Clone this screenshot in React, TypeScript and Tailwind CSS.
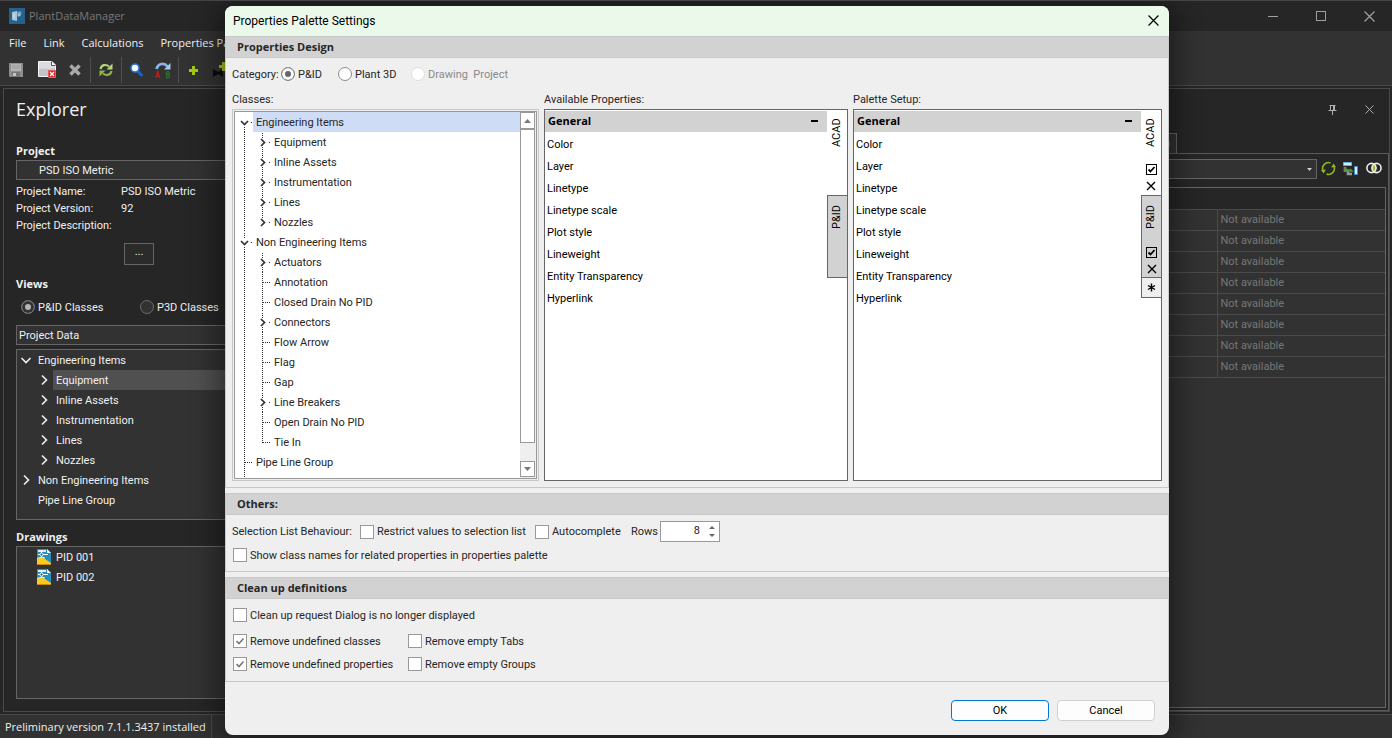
import { ReactNode, useState } from "react";
import clsx from "clsx";

type TreeNode = {
    label: string
    level: number
    state?: "open" | "closed"
    last?: boolean
}

const classNodes: TreeNode[] = [
    { label: "Engineering Items", level: 0, state: "open" },
    { label: "Equipment", level: 1, state: "closed" },
    { label: "Inline Assets", level: 1, state: "closed" },
    { label: "Instrumentation", level: 1, state: "closed" },
    { label: "Lines", level: 1, state: "closed" },
    { label: "Nozzles", level: 1, state: "closed", last: true },
    { label: "Non Engineering Items", level: 0, state: "open" },
    { label: "Actuators", level: 1, state: "closed" },
    { label: "Annotation", level: 1 },
    { label: "Closed Drain No PID", level: 1 },
    { label: "Connectors", level: 1, state: "closed" },
    { label: "Flow Arrow", level: 1 },
    { label: "Flag", level: 1 },
    { label: "Gap", level: 1 },
    { label: "Line Breakers", level: 1, state: "closed" },
    { label: "Open Drain No PID", level: 1 },
    { label: "Tie In", level: 1, last: true },
    { label: "Pipe Line Group", level: 0 },
    { label: "Signal Line Group", level: 0 },
]

const explorerNodes: TreeNode[] = [
    { label: "Engineering Items", level: 0, state: "open" },
    { label: "Equipment", level: 1, state: "closed" },
    { label: "Inline Assets", level: 1, state: "closed" },
    { label: "Instrumentation", level: 1, state: "closed" },
    { label: "Lines", level: 1, state: "closed" },
    { label: "Nozzles", level: 1, state: "closed" },
    { label: "Non Engineering Items", level: 0, state: "closed" },
    { label: "Pipe Line Group", level: 0 },
]

const properties = ["Color", "Layer", "Linetype", "Linetype scale", "Plot style", "Lineweight", "Entity Transparency", "Hyperlink"]

const CrossIcon = ({ size, className }: { size: number, className?: string }) => (
    <svg width={size} height={size} viewBox="0 0 10 10" className={className} stroke="currentColor" strokeWidth="1.1" fill="none">
        <path d="M0.5 0.5L9.5 9.5M9.5 0.5L0.5 9.5" />
    </svg>
)

const SaveIcon = () => (
    <svg width="14" height="14" viewBox="0 0 14 14">
        <path d="M0 0H14V14H1L0 13Z" fill="#8f8f8f" />
        <path d="M2 1H12V8H2Z" fill="#b4b4b4" />
        <path d="M3 3H11M3 5H11" stroke="#9a9a9a" />
        <path d="M3 9H11V14H3Z" fill="#777" />
        <path d="M4 10H7V13H4Z" fill="#c4c4c4" />
    </svg>
)

const DocumentDeleteIcon = () => (
    <svg width="19" height="18" viewBox="0 0 19 18">
        <path d="M0.5 0.5H14L17.5 4V15.5H0.5Z" fill="#dcdcdf" stroke="#f4f4f4" />
        <path d="M1 8C7 7 12 9 17 7V15H1Z" fill="#c3c3c9" />
        <path d="M13.5 0.5V4.5H17.5" fill="#fff" stroke="#555" />
        <path d="M10.5 9.5H17.5V16.5H10.5Z" fill="#d92525" stroke="#ef5a5a" />
        <path d="M12 11L16 15M16 11L12 15" stroke="#fff" strokeWidth="1.3" />
    </svg>
)

const RefreshIcon = () => (
    <svg width="14" height="14" viewBox="0 0 14 14" fill="none">
        <path d="M1.5 6C2.5 1.5 7 1 10 3.5" stroke="#b7d77a" strokeWidth="2.2" />
        <path d="M13.5 0.5V6.5H7.5Z" fill="#b7d77a" />
        <path d="M12.5 8C11.5 12.500 7 13 4 10.5" stroke="#8db548" strokeWidth="2.2" />
        <path d="M0.5 13.5V7.5H6.5Z" fill="#8db548" />
    </svg>
)

const SearchIcon = () => (
    <svg width="13" height="14" viewBox="0 0 13 14">
        <path d="M8 8.5L11.5 12" stroke="#1e62c9" strokeWidth="3" strokeLinecap="round" />
        <circle cx="5" cy="5" r="4" fill="#f1f8ff" stroke="#2a70d6" strokeWidth="1.6" />
    </svg>
)

const ReplaceIcon = () => (
    <svg width="16" height="17" viewBox="0 0 16 17">
        <path d="M1.5 7C3 1.500 9 0 12.5 4.5" fill="none" stroke="#84b5e6" strokeWidth="2.8" />
        <path d="M15.5 1V7.5H9Z" fill="#a5caef" />
        <path d="M0.8 16L2.7 9.5L4.7 16M1.3 14H4.2" fill="none" stroke="#b52020" strokeWidth="1.4" />
        <path d="M11.5 9.7V15.7M11.5 9.7H13.5Q15 11.2 13.5 12.5H11.5H14Q15.5 14.5 13.5 15.7H11.500" fill="none" stroke="#2f6d22" strokeWidth="1.4" />
    </svg>
)

const DrawingIcon = () => (
    <svg width="14" height="16" viewBox="0 0 14 16">
        <path d="M0 0H10L14 4V15H0Z" fill="#258fbd" />
        <path d="M1 1H9V3H1Z" fill="#d8f1fa" />
        <path d="M10 0L14 4H10Z" fill="#fff" />
        <path d="M1 5.5H11M4.500 1V9" stroke="#fff" />
        <circle cx="4.5" cy="5.5" r="1.5" fill="#145d80" stroke="#fff" />
        <path d="M0 10L5 8L14 14V16H0Z" fill="#fdc91d" />
        <path d="M0 15.5H14" stroke="#c58b0c" />
        <path d="M0 9.5L5 8L8 9" fill="none" stroke="#fff1b5" />
    </svg>
)

const Chevron = ({ open }: { open: boolean }) => (
    <svg width="12" height="12" viewBox="0 0 12 12" fill="none" stroke="currentColor" strokeWidth="1.6">
        <path d={open ? "M1.5 4L6 8.5L10.5 4" : "M4 1.5L8.5 6L4 10.5"} />
    </svg>
)

/* Dotted connector cell of the classes tree, with the expand arrow on top */
const Guide = ({ node }: { node: TreeNode }) => (
    <svg width="18" height="20" viewBox="0 0 18 20" className="shrink-0" fill="none" stroke="#333">
        {node.state
            ? <>
                {node.label !== "Engineering Items" && <path d="M9.5 1V6" strokeDasharray="1 1" />}
                {!node.last && <path d="M9.5 15V20" strokeDasharray="1 1" />}
                <path d="M16 10.5H17" />
                <path d={node.state === "open" ? "M6 9L9.5 12.5L13 9" : "M8 7L11.5 10.5L8 14"} strokeWidth="1.7" />
            </>
            : <>
                <path d={node.last ? "M9.5 0V11" : "M9.5 0V20"} strokeDasharray="1 1" />
                <path d="M10 10.5H17" strokeDasharray="1 1" />
            </>}
    </svg>
)

const ClassRow = ({ node, selected }: { node: TreeNode, selected: boolean }) => (
    <li className="flex h-5 shrink-0">
        {node.level === 1 && (
            <svg width="18" height="20" viewBox="0 0 18 20" className="shrink-0">
                <path d="M9.5 0V20" stroke="#333" strokeDasharray="1 1" />
            </svg>
        )}
        <Guide node={node} />
        <span className={clsx("h-5 flex-1 pl-[3px] leading-[22px]", selected && "bg-[#cfdcf5]")}>{node.label}</span>
    </li>
)

const CheckField = ({ label, className, defaultChecked }: { label: string, className?: string, defaultChecked?: boolean }) => (
    <label className={clsx("flex h-5 items-center gap-[3px] whitespace-nowrap", className)}>
        <span className="grid">
            <input type="checkbox" defaultChecked={defaultChecked} className="peer col-start-1 row-start-1 size-3.5 appearance-none border border-[#999] bg-white" />
            <svg width="14" height="14" viewBox="0 0 14 14" className="pointer-events-none invisible col-start-1 row-start-1 peer-checked:visible" fill="none" stroke="#777" strokeWidth="1.6">
                <path d="M3.5 7L6 9.5L10.5 4.5" />
            </svg>
        </span>
        <span className="pt-0.5">{label}</span>
    </label>
)

const CategoryRadio = ({ label, className, ...rest }: { label: string, className?: string, defaultChecked?: boolean, disabled?: boolean }) => (
    <label className={clsx("flex items-center gap-[3px] whitespace-nowrap", className)}>
        <input type="radio" name="category" {...rest} className="size-3.5 appearance-none rounded-full border border-[#8c8c8c] bg-white checked:bg-[#666] checked:shadow-[inset_0_0_0_3px_#fff] disabled:border-[#ddd]" />
        <span className="pt-0.5">{label}</span>
    </label>
)

const ViewRadio = ({ label, defaultChecked, className }: { label: string, defaultChecked?: boolean, className?: string }) => (
    <label className={clsx("flex items-center gap-[3px] whitespace-nowrap", className)}>
        <input type="radio" name="view" defaultChecked={defaultChecked} className="size-3.5 appearance-none rounded-full border border-[#6e6e6e] bg-[#323232] checked:bg-[#b5b5b5] checked:shadow-[inset_0_0_0_3px_#323232]" />
        <span className="pt-0.5">{label}</span>
    </label>
)

const Section = ({ title, className, children }: { title: string, className?: string, children: ReactNode }) => (
    <section className="border-x border-b border-[#c8c8c8]">
        <h2 className="h-[22px] border-y border-[#c8c8c8] bg-[#d2d2d2] pl-[11px] font-['Open_Sans',sans-serif] font-bold leading-5">{title}</h2>
        <div className={clsx("px-1.5", className)}>{children}</div>
    </section>
)

const TabTools = () => (
    <>
        <label className="grid">
            <input type="checkbox" aria-label="Visible" defaultChecked className="peer col-start-1 row-start-1 size-[11px] appearance-none border border-black" />
            <svg width="11" height="11" viewBox="0 0 11 11" className="pointer-events-none invisible col-start-1 row-start-1 peer-checked:visible" fill="none" stroke="#000" strokeWidth="1.8">
                <path d="M2.5 5.5L4.5 7.5L8.5 3" />
            </svg>
        </label>
        <button aria-label="Remove tab" className="mt-1.5 grid h-2.5 place-items-center">
            <svg width="10" height="10" viewBox="0 0 10 10" stroke="#000" strokeWidth="1.4"><path d="M1 1L9 9M9 1L1 9" /></svg>
        </button>
    </>
)

const PropertyBox = ({ editable }: { editable?: boolean }) => (
    <div className="flex h-[372px] border border-[#666] bg-white pt-px text-black">
        <div className="min-w-0 flex-1">
            <div className="flex h-[21px] items-center justify-between bg-[#d2d2d2] pl-[3px] pr-[9px]">
                <h3 className="font-['Open_Sans',sans-serif] font-bold">General</h3>
                <button aria-label="Collapse" className="mb-0.5 h-[2px] w-[7px] bg-black" />
            </div>
            <ul>
                {properties.map(property => <li key={property} className="h-[22px] pl-[2px] leading-[26px]">{property}</li>)}
            </ul>
        </div>
        <div className="flex w-5 flex-col">
            <div className="flex h-[84px] flex-col items-center">
                <button className="mt-[7px] h-[29px] rotate-180 [writing-mode:vertical-rl]">ACAD</button>
                {editable && <div className="mt-[17px] flex flex-col items-center"><TabTools /></div>}
            </div>
            <div className="-mr-px flex h-[83px] flex-col items-center border border-[#666] bg-[#d2d2d2]">
                <button className="mt-2 h-[26px] rotate-180 [writing-mode:vertical-rl]">P&amp;ID</button>
                {editable && <div className="mt-[17px] flex flex-col items-center"><TabTools /></div>}
            </div>
            {editable && (
                <button aria-label="New tab" className="-mr-px grid h-5 place-items-center border border-t-0 border-[#666] bg-[#efefef]">
                    <svg width="9" height="9" viewBox="0 0 9 9" stroke="#000" strokeWidth="1.4">
                        <path d="M4.5 0.5V8.5M1 2.5L8 6.5M8 2.5L1 6.5" />
                    </svg>
                </button>
            )}
        </div>
    </div>
)

const PaletteDialog = () => {
    const [rows, setRows] = useState(8)

    return (
        <div role="dialog" aria-labelledby="dialog-title" className="w-[944px] overflow-hidden rounded-lg bg-[#efefef] text-[#262626] shadow-[0_4px_28px_6px_rgba(0,0,0,0.45)]">
            <div className="flex h-[30px] items-center justify-between bg-[#eaf9ea] pl-2 pr-2.5 text-black">
                <h1 id="dialog-title" className="text-xs">Properties Palette Settings</h1>
                <button aria-label="Close" className="pb-0.5"><CrossIcon size={11} /></button>
            </div>

            <Section title="Properties Design" className="pb-1.5 pt-1.5">
                <div className="flex h-5 items-center">
                    <span className="w-[49px] pt-0.5">Category:</span>
                    <CategoryRadio label="P&ID" defaultChecked className="w-[57px]" />
                    <CategoryRadio label="Plant 3D" className="w-[73px]" />
                    <CategoryRadio label={"Drawing\u00a0 Project"} disabled className="text-[#8a8a8a]" />
                </div>
                <div className="mt-[7px] grid grid-cols-[307fr_304fr_309fr] gap-x-[5px]">
                    <div>
                        <p className="h-[18px] leading-[18px]">Classes:</p>
                        <div className="h-[372px] border border-[#c8c8c8] p-px">
                            <div className="flex h-full border border-[#999] bg-white">
                                <ul className="h-full flex-1 overflow-hidden">
                                    {classNodes.map((node, index) => <ClassRow key={node.label} node={node} selected={index === 0} />)}
                                </ul>
                                <div className="flex w-4 flex-col bg-[#efefef] pr-px">
                                    <button aria-label="Scroll up" className="grid h-[17px] place-items-center border border-[#999] bg-white">
                                        <svg width="7" height="4" viewBox="0 0 7 4" fill="#777"><path d="M0 4L3.5 0L7 4Z" /></svg>
                                    </button>
                                    <div className="h-[314px] border border-[#999] bg-white" />
                                    <button aria-label="Scroll down" className="mb-px mt-auto grid h-4 place-items-center border border-[#999] bg-white">
                                        <svg width="7" height="4" viewBox="0 0 7 4" fill="#777"><path d="M0 0L3.5 4L7 0Z" /></svg>
                                    </button>
                                </div>
                            </div>
                        </div>
                    </div>
                    <div>
                        <p className="h-[18px] leading-[18px]">Available Properties:</p>
                        <PropertyBox />
                    </div>
                    <div>
                        <p className="h-[18px] leading-[18px]">Palette Setup:</p>
                        <PropertyBox editable />
                    </div>
                </div>
            </Section>

            <div className="h-[5px]" />
            <Section title="Others:" className="pb-1.5 pt-1.5">
                <div className="flex h-[21px] items-center">
                    <span className="w-32 pt-0.5">Selection List Behaviour:</span>
                    <CheckField label="Restrict values to selection list" className="w-[175px]" />
                    <CheckField label="Autocomplete" className="w-24" />
                    <label htmlFor="rows" className="w-[29px] pt-0.5">Rows</label>
                    <div className="flex h-[21px] w-[60px] items-center border border-[#999] bg-white pr-1">
                        <input id="rows" value={rows} onChange={e => setRows(Number(e.target.value) || 0)} className="w-full min-w-0 pr-[9px] text-right outline-none" />
                        <div className="flex flex-col gap-[5px]">
                            <button aria-label="More rows" onClick={() => setRows(rows + 1)}>
                                <svg width="6" height="3" viewBox="0 0 6 3" fill="#666" className="block"><path d="M0 3L3 0L6 3Z" /></svg>
                            </button>
                            <button aria-label="Fewer rows" onClick={() => setRows(rows - 1)}>
                                <svg width="6" height="3" viewBox="0 0 6 3" fill="#666" className="block"><path d="M0 0L3 3L6 0Z" /></svg>
                            </button>
                        </div>
                    </div>
                </div>
                <CheckField label="Show class names for related properties in properties palette" className="mt-[3px] pl-px" />
            </Section>

            <div className="h-[5px]" />
            <Section title="Clean up definitions" className="pb-[7px] pt-1.5">
                <CheckField label="Clean up request Dialog is no longer displayed" className="pl-px" />
                <div className="mt-1.5 grid grid-cols-[175px_1fr] gap-y-[3px] pl-px">
                    <CheckField label="Remove undefined classes" defaultChecked />
                    <CheckField label="Remove empty Tabs" />
                    <CheckField label="Remove undefined properties" defaultChecked />
                    <CheckField label="Remove empty Groups" />
                </div>
            </Section>

            <div className="flex justify-end gap-2 px-3.5 pb-3.5 pt-[18px] text-black">
                <button className="h-[21px] w-[98px] rounded border border-[#0078d4] bg-[#fdfdfd] pt-0.5">OK</button>
                <button className="h-[21px] w-[98px] rounded border border-[#d0d0d0] bg-[#fdfdfd] pt-0.5">Cancel</button>
            </div>
        </div>
    )
}

const Explorer = () => (
    <aside className="flex w-[300px] shrink-0 flex-col border border-[#4a4a4a] bg-[#262626] pb-3 pl-3 text-[#f0f0f0]">
        <h2 className="h-10 font-['Open_Sans',sans-serif] text-lg leading-10">Explorer</h2>
        <h3 className="mt-[13px] h-[18px] font-['Open_Sans',sans-serif] font-bold leading-[17px]">Project</h3>
        <select aria-label="Project" className="h-5 appearance-none border border-[#666] bg-[#323232] pl-[22px] pt-0.5 leading-4">
            <option>PSD ISO Metric</option>
        </select>
        <dl className="mt-[3px] grid grid-cols-[105px_1fr] leading-[17px]">
            <dt>Project Name:</dt>
            <dd>PSD ISO Metric</dd>
            <dt>Project Version:</dt>
            <dd>92</dd>
            <dt>Project Description:</dt>
            <dd></dd>
        </dl>
        <button aria-label="Project details" className="ml-[108px] mt-[9px] h-[22px] w-[30px] border border-[#666] bg-[#2b2b2b] pb-1 leading-4">...</button>
        <h3 className="mt-2.5 h-[18px] font-['Open_Sans',sans-serif] font-bold leading-[17px]">Views</h3>
        <div className="mt-1 flex h-5 items-center pl-[5px]">
            <ViewRadio label="P&ID Classes" defaultChecked className="w-[119px]" />
            <ViewRadio label="P3D Classes" />
        </div>
        <select aria-label="Data view" className="mt-2 h-5 appearance-none border border-[#666] bg-[#323232] pl-[2px] pt-0.5 leading-4">
            <option>Project Data</option>
        </select>
        <ul className="mt-1 border border-[#666] bg-[#323232] pb-[9px]">
            {explorerNodes.map(node => (
                <li key={node.label} className={clsx("flex h-5 items-center", node.level === 1 ? "pl-[21px]" : "pl-[3px]")}>
                    <span className="w-[15px] shrink-0">{node.state && <Chevron open={node.state === "open"} />}</span>
                    <span className={clsx("h-5 flex-1 pl-[3px] leading-[22px]", node.label === "Equipment" && "bg-[#505050]")}>{node.label}</span>
                </li>
            ))}
        </ul>
        <h3 className="mt-2 h-[18px] font-['Open_Sans',sans-serif] font-bold leading-[17px]">Drawings</h3>
        <ul className="flex-1 border border-[#666] bg-[#323232] pl-5">
            {["PID 001", "PID 002"].map(drawing => (
                <li key={drawing} className="flex h-5 items-center gap-[5px]"><DrawingIcon /><span className="pt-0.5">{drawing}</span></li>
            ))}
        </ul>
    </aside>
)

const PropertiesPanel = () => (
    <section className="flex flex-1 flex-col border border-[#4a4a4a] bg-[#262626] text-[#b0b0b0]">
        <div className="flex h-11 items-center justify-end gap-7 pb-[3px] pr-[15px]">
            <button aria-label="Pin">
                <svg width="9" height="10" viewBox="0 0 9 10" fill="none" stroke="currentColor">
                    <path d="M1.5 0.5H7.5M2.5 1V5.5M5.5 1V5.5M6.5 1V5.5M0.5 5.5H8.5M4.5 6V10" />
                </svg>
            </button>
            <button aria-label="Close panel"><CrossIcon size={9} /></button>
        </div>
        <div className="flex h-5 justify-end pr-[212px]">
            <button aria-label="Properties" className="flex w-24 items-center justify-end border border-b-0 border-[#666] bg-[#323232] pr-1.5">
                <svg width="10" height="10" viewBox="0 0 10 10"><circle cx="5" cy="5" r="5" fill="#b5473a" /></svg>
            </button>
        </div>
        <div className="flex flex-1 flex-col border border-[#5a5a5a] pb-[2px] pl-1 pr-[2px] pt-[5px]">
            <div className="flex h-5 items-center">
                <div className="grid flex-1">
                    <select aria-label="Element" className="col-start-1 row-start-1 h-5 w-full appearance-none border border-[#666] bg-[#323232]" />
                    <svg width="5" height="3" viewBox="0 0 5 3" fill="#ccc" className="pointer-events-none col-start-1 row-start-1 mr-[5px] self-center justify-self-end"><path d="M0 0H5L2.5 3Z" /></svg>
                </div>
                <div className="flex items-center gap-[7px] pb-0.5 pl-1 pr-1">
                    <button aria-label="Refresh">
                        <svg width="15" height="15" viewBox="0 0 15 15" fill="none" stroke="#8fb51f" strokeWidth="1.6">
                            <path d="M2 9.5A5.8 5.8 0 0 1 9.5 2M13 5.5A5.8 5.8 0 0 1 5.5 13" />
                            <path d="M0 9L5 8.5L2.5 12.5ZM15 6L10 6.5L12.5 2.5Z" fill="#8fb51f" stroke="none" />
                        </svg>
                    </button>
                    <button aria-label="Copy values">
                        <svg width="16" height="15" viewBox="0 0 16 15">
                            <path d="M0.5 1.5H8.5V4.5H0.5Z" fill="#d6edfb" stroke="#6bb1e0" />
                            <path d="M11.5 5.5H14.5V13.5H11.5Z" fill="#d6edfb" stroke="#3d8fd0" />
                            <path d="M2 6V9.5H5V13H9" fill="none" stroke="#999" strokeWidth="2.6" />
                            <path d="M2 6V9.5H5M4 10H9L7 8" fill="none" stroke="#4c9a2a" strokeWidth="1.6" />
                        </svg>
                    </button>
                    <button aria-label="Compare">
                        <svg width="16" height="12" viewBox="0 0 16 12" fill="none">
                            <path d="M8 1.5Q12 6 8 10.5Q4 6 8 1.5" fill="#9ac41c" />
                            <circle cx="5.5" cy="6" r="4.6" stroke="#eee" strokeWidth="1.6" />
                            <circle cx="10.5" cy="6" r="4.6" stroke="#eee" strokeWidth="1.6" />
                        </svg>
                    </button>
                </div>
            </div>
            <div className="mt-2 flex-1 border border-[#666] bg-[#323232]">
                <table className="w-full table-fixed border-collapse text-left text-[#777]">
                    <colgroup>
                        <col />
                        <col className="w-[168px]" />
                    </colgroup>
                    <tbody>
                        <tr className="h-[21px] border-b border-[#4a4a4a] bg-[#262626]"><td colSpan={2}></td></tr>
                        {Array.from({ length: 8 }, (_, index) => (
                            <tr key={index} className="h-[21px] border-b border-[#4a4a4a]">
                                <td></td>
                                <td className="border-l border-[#4a4a4a] pl-[3px] leading-5">Not available</td>
                            </tr>
                        ))}
                    </tbody>
                </table>
            </div>
        </div>
    </section>
)

const ToolSeparator = ({ className }: { className: string }) => <span className={clsx("h-[26px] w-px bg-[#4f4f4f]", className)} />

export default function App() {
    return (
        <div className="relative flex min-h-screen flex-col overflow-hidden border-t border-[#444] bg-[#262626] font-[Roboto,sans-serif] text-[11px]">
            <header className="border-b border-[#4a4a4a] bg-[#323232] font-['Open_Sans',sans-serif] text-[#f0f0f0]">
                <div className="flex h-[30px] items-center bg-[#262626] text-[#787878]">
                    <svg width="16" height="16" viewBox="0 0 16 16" className="ml-[9px] mr-1">
                        <path d="M0 0H16V16H0Z" fill="#27608a" />
                        <path d="M3 4L8 3V13L3 12Z" fill="#a9c6d8" />
                        <path d="M8 4Q13 2 12.5 6Q12 9.5 8.5 8.5Z" fill="#6c9fbf" />
                        <path d="M5 6V10M10 5.5V8" stroke="#d5e5ee" />
                    </svg>
                    <span>PlantDataManager</span>
                    <div className="ml-auto flex items-center gap-[38px] pr-[17px] text-[#a0a0a0]">
                        <button aria-label="Minimize" className="h-px w-2.5 bg-[#a0a0a0]" />
                        <button aria-label="Maximize" className="size-2.5 border border-[#a0a0a0]" />
                        <button aria-label="Close window"><CrossIcon size={11} /></button>
                    </div>
                </div>
                <nav className="flex h-6 items-center gap-[17px] pl-[9px]">
                    <button>File</button>
                    <button>Link</button>
                    <button>Calculations</button>
                    <button>Properties Palette</button>
                </nav>
                <div className="flex h-[30px] items-center pl-[9px]">
                    <button aria-label="Save"><SaveIcon /></button>
                    <button aria-label="Delete document" className="ml-[15px]"><DocumentDeleteIcon /></button>
                    <button aria-label="Delete" className="ml-3">
                        <svg width="12" height="12" viewBox="0 0 12 12" stroke="#a9a9a9" strokeWidth="3.5"><path d="M1.5 1.5L10.5 10.5M10.5 1.5L1.5 10.5" /></svg>
                    </button>
                    <ToolSeparator className="ml-[9px]" />
                    <button aria-label="Refresh data" className="ml-2"><RefreshIcon /></button>
                    <ToolSeparator className="ml-2" />
                    <button aria-label="Search" className="ml-2"><SearchIcon /></button>
                    <button aria-label="Replace" className="ml-3"><ReplaceIcon /></button>
                    <ToolSeparator className="ml-[7px]" />
                    <button aria-label="Add" className="ml-2.5">
                        <svg width="9" height="9" viewBox="0 0 9 9" stroke="#a5c81a" strokeWidth="3"><path d="M4.5 0V9M0 4.5H9" /></svg>
                    </button>
                    <button aria-label="Add valve" className="ml-[15px]">
                        <svg width="17" height="16" viewBox="0 0 17 16">
                            <path d="M0 7L5 10L10 7V15L5 12L0 15Z" fill="#0a0a0a" />
                            <path d="M10.5 0V9M6 4.5H15" stroke="#a5c81a" strokeWidth="3" />
                        </svg>
                    </button>
                </div>
            </header>

            <main className="flex flex-1 gap-1 py-[2px] pl-[3px] pr-[2px]">
                <Explorer />
                <PropertiesPanel />
            </main>

            <footer className="flex h-6 border-t border-[#4a4a4a] bg-[#323232] pl-[5px] font-['Open_Sans',sans-serif] leading-[23px] text-[#f0f0f0]">
                <span className="border-r border-[#4a4a4a] pr-[5px]">Preliminary version 7.1.1.3437 installed</span>
            </footer>

            <div className="absolute inset-x-0 top-[5px] flex justify-center pl-[2px]">
                <PaletteDialog />
            </div>
        </div>
    );
}
